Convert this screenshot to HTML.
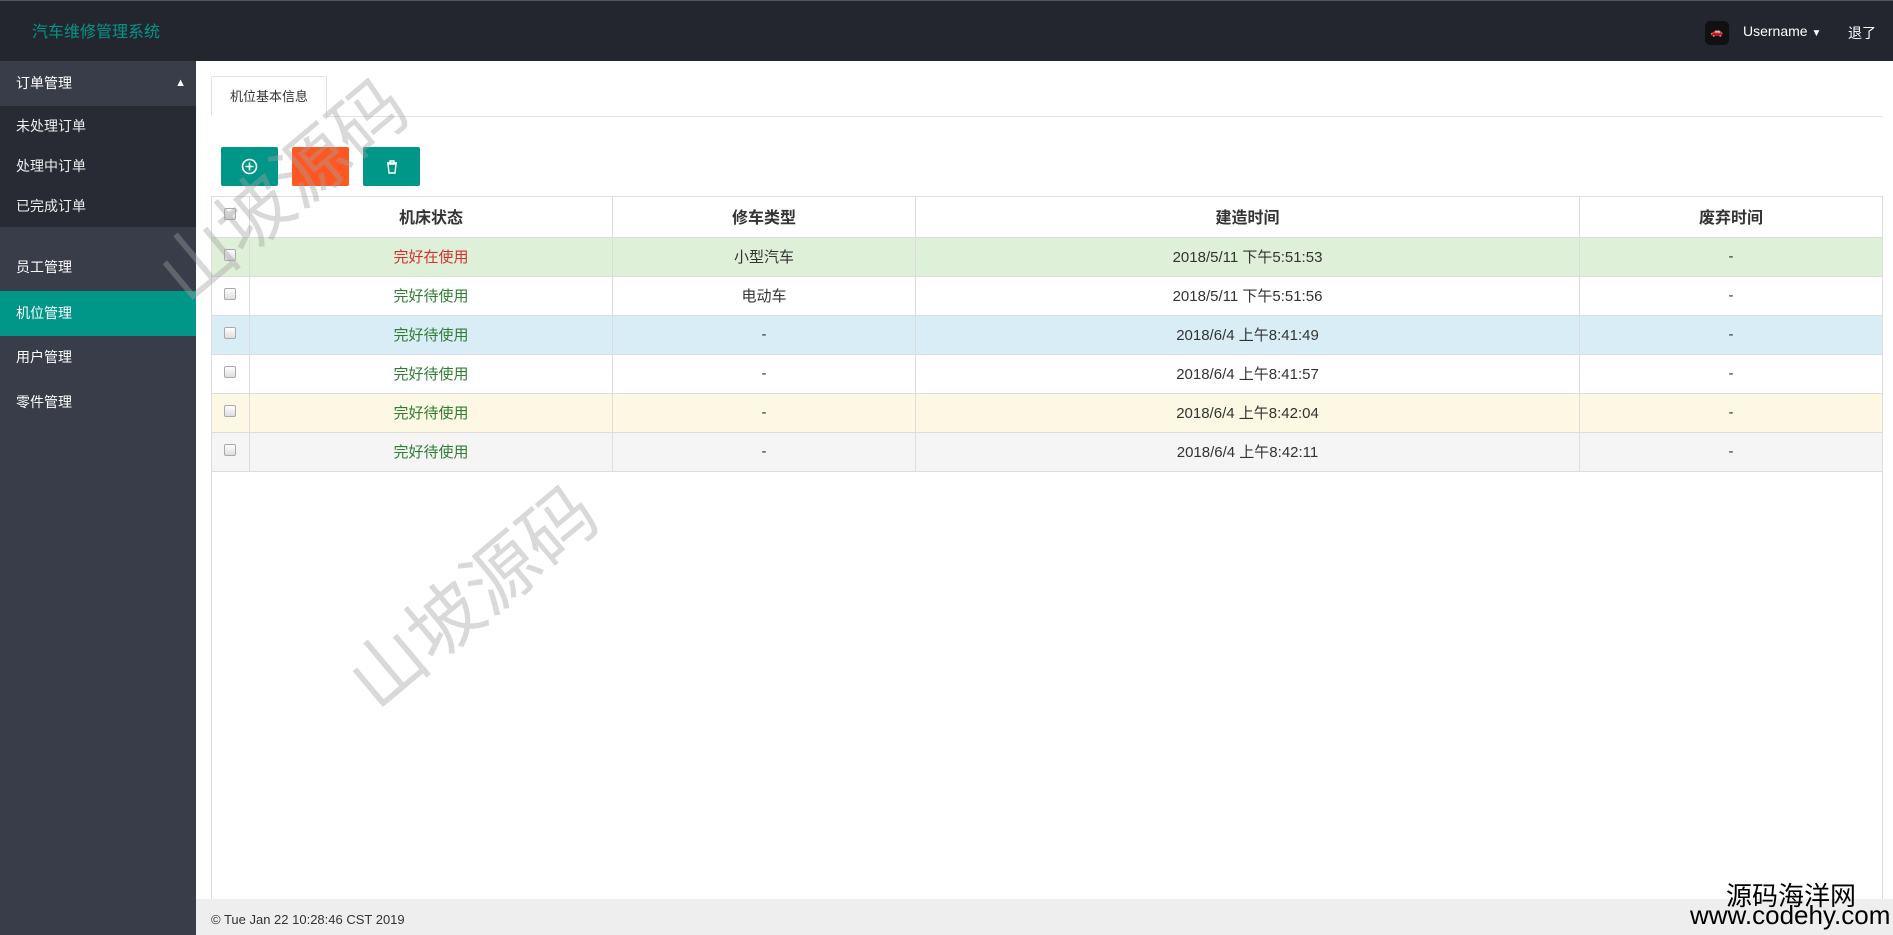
<!DOCTYPE html>
<html><head><meta charset="utf-8"><style>
*{margin:0;padding:0;box-sizing:border-box}
body{width:1893px;height:935px;overflow:hidden;background:#fff;font-family:"Liberation Sans","Noto Sans CJK SC",sans-serif;position:relative}
.top{position:absolute;left:0;top:0;width:1893px;height:61px;background:#23262e;border-top:1px solid #555}
.logo{position:absolute;left:32px;top:17px;color:#009688;font-size:16px}
.side{position:absolute;left:0;top:61px;width:196px;height:874px;background:#393d49}
.side div{position:absolute;left:0;width:196px;color:#fff;font-size:14px;padding-left:16px}
.content{position:absolute;left:196px;top:61px;width:1697px;height:838px;background:#fff}
.foot{position:absolute;left:196px;top:899px;width:1697px;height:36px;background:#eee;color:#333;font-size:13px;padding:13px 0 0 15px}
table{position:absolute;left:211px;top:196px;width:1672px;border-collapse:collapse;font-size:15px;color:#333}
td,th{border:1px solid #ddd;height:39px;text-align:center}
th{height:41px;font-size:16px;padding-bottom:3px}
td{padding-bottom:2px}
.cb{width:38px;text-align:left;padding-left:12px}
.cb span{display:inline-block;width:12px;height:12px;border:1px solid #aaa;border-radius:2px;background:linear-gradient(#fff,#ddd)}
.g{color:#2e7d32}.r{color:#d32f2f}
.btn{position:absolute;top:147px;height:39px;width:57px;border-radius:2px}
.wm{position:absolute;color:rgba(160,160,160,.4);font-size:74px;transform:rotate(-40deg);transform-origin:left top;white-space:nowrap}
</style></head><body>
<div class="top"><div class="logo">汽车维修管理系统</div>
<div style="position:absolute;left:1705px;top:20px;width:24px;height:24px;border-radius:5px;background:#111;color:#ddd;font-size:10px;text-align:center;line-height:24px">🚗</div>
<div style="position:absolute;left:1743px;top:22px;color:#fff;font-size:14px">Username <span style="font-size:10px">▼</span></div>
<div style="position:absolute;left:1848px;top:22px;color:#fff;font-size:14px">退了</div></div>
<div class="side">
<div style="top:0;height:45px;line-height:45px;background:#393d49">订单管理<span style="position:absolute;right:10px;font-size:11px">▲</span></div>
<div style="top:45px;height:121px;background:#282b33"></div>
<div style="top:45px;height:40px;line-height:40px;color:#eee">未处理订单</div>
<div style="top:85px;height:40px;line-height:40px;color:#eee">处理中订单</div>
<div style="top:125px;height:40px;line-height:40px;color:#eee">已完成订单</div>
<div style="top:184px;height:45px;line-height:45px">员工管理</div>
<div style="top:230px;height:45px;line-height:45px;background:#009688">机位管理</div>
<div style="top:274px;height:45px;line-height:45px">用户管理</div>
<div style="top:319px;height:45px;line-height:45px">零件管理</div>
</div>
<div class="content"></div>
<div style="position:absolute;left:211px;top:116px;width:1672px;border-top:1px solid #e2e2e2"></div>
<div style="position:absolute;left:211px;top:76px;width:116px;height:41px;border:1px solid #e2e2e2;border-bottom:1px solid #fff;border-radius:2px 2px 0 0;background:#fff;font-size:13px;color:#333;text-align:center;line-height:40px">机位基本信息</div>
<div class="btn" style="left:221px;background:#009688"><svg width="57" height="39"><circle cx="28.5" cy="19.5" r="7" fill="none" stroke="#fff" stroke-width="1.6"/><path d="M24.5 19.5h8M28.5 15.5v8" stroke="#fff" stroke-width="1.6"/></svg></div>
<div class="btn" style="left:292px;background:#ff5722"></div>
<div class="btn" style="left:363px;background:#009688"><svg width="57" height="39"><path d="M24 16h10M27 16v-2h4v2M25 17h8l-1 9h-6z" fill="none" stroke="#fff" stroke-width="1.4"/></svg></div>
<div style="position:absolute;left:211px;top:196px;width:1672px;height:703px;border:1px solid #ddd;border-bottom:none"></div>
<table>
<tr><th class="cb"><span></span></th><th style="width:363px">机床状态</th><th style="width:303px">修车类型</th><th style="width:664px">建造时间</th><th>废弃时间</th></tr>
<tr style="background:#dff0d8"><td class="cb"><span></span></td><td class="r">完好在使用</td><td>小型汽车</td><td>2018/5/11 下午5:51:53</td><td>-</td></tr>
<tr><td class="cb"><span></span></td><td class="g">完好待使用</td><td>电动车</td><td>2018/5/11 下午5:51:56</td><td>-</td></tr>
<tr style="background:#d9edf7"><td class="cb"><span></span></td><td class="g">完好待使用</td><td>-</td><td>2018/6/4 上午8:41:49</td><td>-</td></tr>
<tr><td class="cb"><span></span></td><td class="g">完好待使用</td><td>-</td><td>2018/6/4 上午8:41:57</td><td>-</td></tr>
<tr style="background:#fcf8e3"><td class="cb"><span></span></td><td class="g">完好待使用</td><td>-</td><td>2018/6/4 上午8:42:04</td><td>-</td></tr>
<tr style="background:#f5f5f5"><td class="cb"><span></span></td><td class="g">完好待使用</td><td>-</td><td>2018/6/4 上午8:42:11</td><td>-</td></tr>
</table>
<div class="foot">© Tue Jan 22 10:28:46 CST 2019</div>
<div class="wm" style="left:132px;top:240px">山坡源码</div>
<div class="wm" style="left:322px;top:647px">山坡源码</div>
<div style="position:absolute;left:1726px;top:876px;font-size:26px;color:#000">源码海洋网</div>
<div style="position:absolute;left:1690px;top:900px;font-size:26px;color:#000">www.codehy.com</div>
</body></html>
